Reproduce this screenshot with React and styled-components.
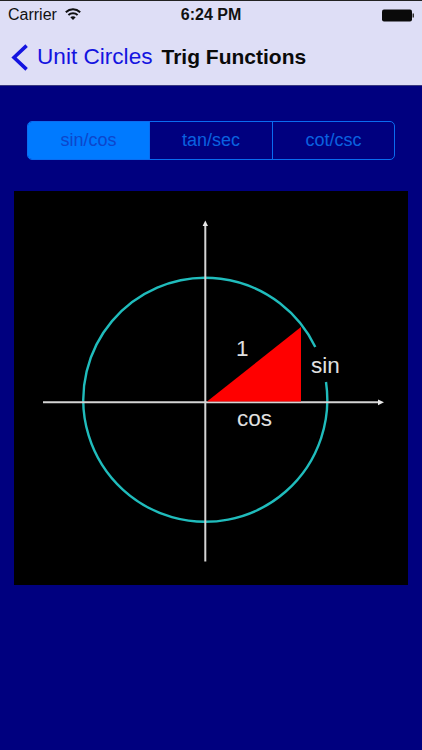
import React from "react";
import styled, { createGlobalStyle } from "styled-components";

const Global = createGlobalStyle`
  html, body { margin: 0; padding: 0; background: #00007f; }
  * { box-sizing: border-box; }
`;
const Page = styled.div`
  width: 422px; height: 750px; overflow: hidden; background: #00007f;
  font-family: "Liberation Sans", Arial, sans-serif;
  display: flex; flex-direction: column;
`;
const Header = styled.header`
  height: 86px; flex: none; background: #dedef6; border-top: 1px solid #222;
  border-bottom: 1px solid #3a3a80; display: flex; flex-direction: column;
`;
const StatusBar = styled.div`
  height: 28px; padding: 0 8px; display: grid; grid-template-columns: 1fr auto 1fr;
  align-items: center; font-size: 16px; color: #111;
`;
const StatusLeft = styled.div`display: flex; align-items: center; gap: 8px;`;
const Time = styled.div`font-weight: 700; font-size: 16px;`;
const StatusRight = styled.div`display: flex; justify-content: flex-end;`;
const NavBar = styled.nav`
  flex: 1; display: flex; align-items: center; padding: 0 0 0 11px;
`;
const Back = styled.div`
  display: flex; align-items: center; gap: 8px; color: #1414e0; font-size: 22.6px;
`;
const Title = styled.div`
  font-size: 21px; font-weight: 700; color: #0a0a0a; margin-left: 9px;
`;
const Main = styled.main`
  flex: 1; display: flex; flex-direction: column; padding: 35px 14px 0 14px;
`;
const Segments = styled.div`
  display: grid; grid-template-columns: 121px 123px 1fr; height: 39px; margin: 0 13px;
  border: 1px solid #0a6cf0; border-radius: 5px; overflow: hidden;
`;
const Segment = styled.div`
  display: flex; align-items: center; justify-content: center; font-size: 18px;
  color: ${p => (p.$active ? "#0d46cc" : "#0a62e0")};
  background: ${p => (p.$active ? "#007aff" : "transparent")};
  & + & { border-left: 1px solid #0a6cf0; }
`;
const Figure = styled.div`
  width: 394px; height: 394px; margin-top: 31px; background: #000;
`;
const Diagram = styled.svg`display: block; width: 100%; height: 100%;`;

const Wifi = () => (
  <svg width="16" height="14" viewBox="0 0 16 14" fill="none" stroke="#111" strokeWidth="2">
    <path d="M0.8 4.2 C5 .4 11 .4 15.2 4.2" />
    <path d="M3.4 7 C6 4.7 10 4.7 12.6 7" />
    <path d="M8 12 L5.3 9.2 C7 8 9 8 10.7 9.2 Z" fill="#111" stroke="none" />
  </svg>
);
const Battery = () => (
  <svg width="32" height="13" viewBox="0 0 32 13">
    <rect x="0" y="0.5" width="30" height="12" rx="2" fill="#0a0a0a" />
    <rect x="30.5" y="4.5" width="1.5" height="4" fill="#333" />
  </svg>
);
const Chevron = () => (
  <svg width="18" height="27" viewBox="0 0 18 27" fill="none" stroke="#1414e0" strokeWidth="3.6">
    <path d="M15.6 1.6 L3 13.5 L15.6 25.4" />
  </svg>
);

export default function App() {
  return (
    <Page>
      <Global />
      <Header>
        <StatusBar>
          <StatusLeft>Carrier <Wifi /></StatusLeft>
          <Time>6:24 PM</Time>
          <StatusRight><Battery /></StatusRight>
        </StatusBar>
        <NavBar>
          <Back><Chevron />Unit Circles</Back>
          <Title>Trig Functions</Title>
        </NavBar>
      </Header>
      <Main>
        <Segments>
          <Segment $active>sin/cos</Segment>
          <Segment>tan/sec</Segment>
          <Segment>cot/csc</Segment>
        </Segments>
        <Figure>
          <Diagram viewBox="0 0 394 394">
            <path d="M301.3 156 A122 122 0 1 0 312 191" fill="none" stroke="#20bcbc" strokeWidth="2.4" />
            <path d="M29 211.3 H366" stroke="#d4d4d4" strokeWidth="2" />
            <path d="M370 211.3 L364 208.4 V214.2 Z" fill="#e8e8e8" />
            <path d="M191.3 33 V370.5" stroke="#d4d4d4" strokeWidth="2" />
            <path d="M191.3 29.5 L188.6 35 H194 Z" fill="#e8e8e8" />
            <path d="M193 210.5 L287 136 V210.5 Z" fill="#ff0000" />
            <g fill="#e0e0e0" fontFamily="'Liberation Sans', Arial, sans-serif" fontSize="22.5">
              <text x="222" y="165">1</text>
              <text x="297" y="182">sin</text>
              <text x="223" y="235">cos</text>
            </g>
          </Diagram>
        </Figure>
      </Main>
    </Page>
  );
}
